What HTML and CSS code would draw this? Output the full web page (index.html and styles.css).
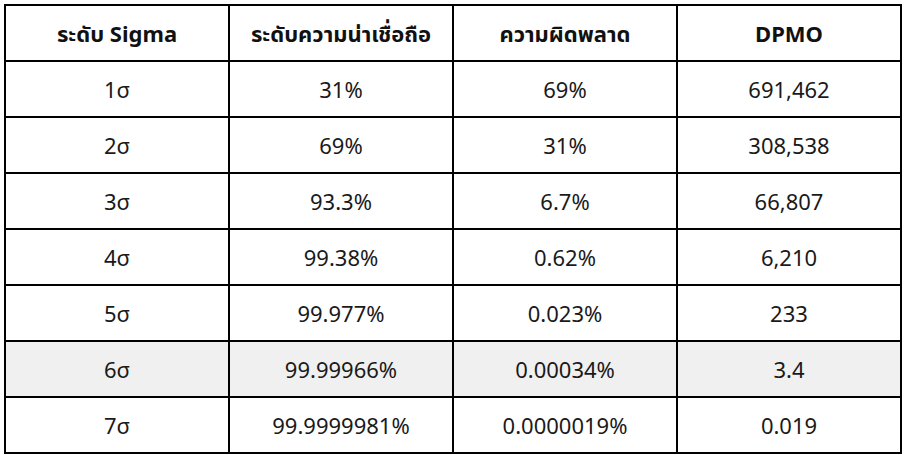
FILE: index.html
```html
<!DOCTYPE html>
<html lang="th">
<head>
<meta charset="utf-8">
<link rel="stylesheet" href="styles.css">
</head>
<body>
<table class="sigma-table">
  <thead>
    <tr>
      <th>ระดับ Sigma</th>
      <th>ระดับความน่าเชื่อถือ</th>
      <th>ความผิดพลาด</th>
      <th>DPMO</th>
    </tr>
  </thead>
  <tbody>
    <tr><td>1σ</td><td>31%</td><td>69%</td><td>691,462</td></tr>
    <tr><td>2σ</td><td>69%</td><td>31%</td><td>308,538</td></tr>
    <tr><td>3σ</td><td>93.3%</td><td>6.7%</td><td>66,807</td></tr>
    <tr><td>4σ</td><td>99.38%</td><td>0.62%</td><td>6,210</td></tr>
    <tr><td>5σ</td><td>99.977%</td><td>0.023%</td><td>233</td></tr>
    <tr class="highlight"><td>6σ</td><td>99.99966%</td><td>0.00034%</td><td>3.4</td></tr>
    <tr><td>7σ</td><td>99.9999981%</td><td>0.0000019%</td><td>0.019</td></tr>
  </tbody>
</table>
</body>
</html>
```
FILE: styles.css
```css
html, body {
  margin: 0;
  padding: 0;
  background: #ffffff;
}
body {
  padding: 4px;
  font-family: "Noto Sans", "Noto Sans Thai", "DejaVu Sans", sans-serif;
  color: #1a1a1a;
}
.sigma-table {
  width: 898px;
  table-layout: fixed;
  border-collapse: separate;
  border-spacing: 0;
  border-top: 2px solid #000;
  border-left: 2px solid #000;
}
.sigma-table th,
.sigma-table td {
  height: 54px;
  padding: 0;
  text-align: center;
  vertical-align: middle;
  border-right: 2px solid #000;
  border-bottom: 2px solid #000;
  font-size: 22px;
  line-height: 30px;
}
.sigma-table th {
  font-weight: 700;
  color: #111;
}
.sigma-table .highlight td {
  background: #f0f0f0;
}
```
